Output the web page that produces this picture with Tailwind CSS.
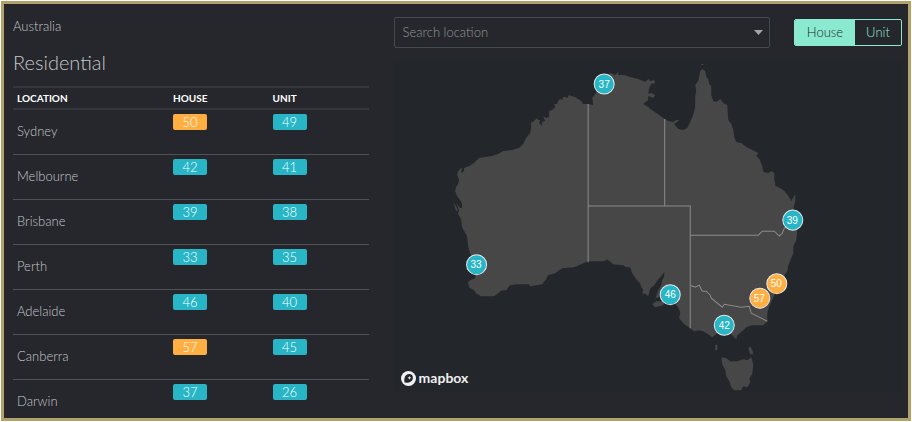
<!DOCTYPE html>
<html lang="en">
<head>
  <meta charset="UTF-8" />
  <meta name="viewport" content="width=device-width, initial-scale=1.0" />
  <title>Australia - Residential</title>
  <script src="https://cdn.jsdelivr.net/npm/@tailwindcss/browser@4"></script>
</head>
<body class="bg-white font-['Lato',sans-serif] font-light text-[#c4c6c9]">

  <div class="h-screen p-px">
    <div class="flex h-full gap-[25px] overflow-hidden border-3 border-[#b2a169] bg-[#26272c] pl-[9px] pr-[6px]">

      <!-- SCORES -->
      <section class="w-2/5 shrink-0 pt-3">
        <p class="text-[13px] leading-5">Australia</p>
        <h1 class="mt-3 text-[20px] leading-7">Residential</h1>

        <table class="mt-[10px] w-full table-fixed text-left text-[13px]">
          <thead class="border-y-2 border-[#34363a] text-[10px] text-white">
            <tr class="h-[22px]">
              <th class="w-[45%] pl-1 font-bold">LOCATION</th>
              <th class="w-[28%] font-bold">HOUSE</th>
              <th class="font-bold">UNIT</th>
            </tr>
          </thead>
          <tbody>
            <tr class="h-[45px] border-b border-[#505155]">
              <td class="pl-1">Sydney</td>
              <td class="pt-1 align-top"><span class="block h-4 w-[34px] rounded-xs bg-[#ffae42] text-center leading-4 text-white">50</span></td>
              <td class="pt-1 align-top"><span class="block h-4 w-[34px] rounded-xs bg-[#28b6c6] text-center leading-4 text-white">49</span></td>
            </tr>
            <tr class="h-[45px] border-b border-[#505155]">
              <td class="pl-1">Melbourne</td>
              <td class="pt-1 align-top"><span class="block h-4 w-[34px] rounded-xs bg-[#28b6c6] text-center leading-4 text-white">42</span></td>
              <td class="pt-1 align-top"><span class="block h-4 w-[34px] rounded-xs bg-[#28b6c6] text-center leading-4 text-white">41</span></td>
            </tr>
            <tr class="h-[45px] border-b border-[#505155]">
              <td class="pl-1">Brisbane</td>
              <td class="pt-1 align-top"><span class="block h-4 w-[34px] rounded-xs bg-[#28b6c6] text-center leading-4 text-white">39</span></td>
              <td class="pt-1 align-top"><span class="block h-4 w-[34px] rounded-xs bg-[#28b6c6] text-center leading-4 text-white">38</span></td>
            </tr>
            <tr class="h-[45px] border-b border-[#505155]">
              <td class="pl-1">Perth</td>
              <td class="pt-1 align-top"><span class="block h-4 w-[34px] rounded-xs bg-[#28b6c6] text-center leading-4 text-white">33</span></td>
              <td class="pt-1 align-top"><span class="block h-4 w-[34px] rounded-xs bg-[#28b6c6] text-center leading-4 text-white">35</span></td>
            </tr>
            <tr class="h-[45px] border-b border-[#505155]">
              <td class="pl-1">Adelaide</td>
              <td class="pt-1 align-top"><span class="block h-4 w-[34px] rounded-xs bg-[#28b6c6] text-center leading-4 text-white">46</span></td>
              <td class="pt-1 align-top"><span class="block h-4 w-[34px] rounded-xs bg-[#28b6c6] text-center leading-4 text-white">40</span></td>
            </tr>
            <tr class="h-[45px] border-b border-[#505155]">
              <td class="pl-1">Canberra</td>
              <td class="pt-1 align-top"><span class="block h-4 w-[34px] rounded-xs bg-[#ffae42] text-center leading-4 text-white">57</span></td>
              <td class="pt-1 align-top"><span class="block h-4 w-[34px] rounded-xs bg-[#28b6c6] text-center leading-4 text-white">45</span></td>
            </tr>
            <tr class="h-[45px]">
              <td class="pl-1">Darwin</td>
              <td class="pt-1 align-top"><span class="block h-4 w-[34px] rounded-xs bg-[#28b6c6] text-center leading-4 text-white">37</span></td>
              <td class="pt-1 align-top"><span class="block h-4 w-[34px] rounded-xs bg-[#28b6c6] text-center leading-4 text-white">26</span></td>
            </tr>
          </tbody>
        </table>
      </section>

      <!-- MAP -->
      <section class="min-w-0 flex-1 pt-[13px]">
        <div class="flex items-center gap-6">
          <div class="relative flex-1">
            <select aria-label="Search location" class="block h-[31px] w-full appearance-none rounded-xs border border-[#424a4e] bg-transparent px-2 text-[13px] text-[#93969a]">
              <option>Search location</option>
            </select>
            <svg class="pointer-events-none absolute right-[7px] top-[13px] h-[5px] w-[9px]" viewBox="0 0 9 5" fill="#a3a5a8"><path d="M0 0h9L4.500 5z" /></svg>
          </div>
          <div class="flex h-[27px] overflow-hidden rounded-xs border border-[#8aead0] text-[13px]">
            <button type="button" class="w-[60px] bg-[#8aead0] text-[#26272c]">House</button>
            <button type="button" class="w-[46px] text-[#8aead0]">Unit</button>
          </div>
        </div>

        <div class="relative mt-3 bg-[#23262b]">
          <svg class="block w-full" viewBox="394 60 508 332" role="img" aria-label="Map of Australia">
            <!-- land -->
            <g fill="#474747">
              <path d="M588 104L583 104L581 101L578 99L575 97L571 96L569 95L567 98L565 97L563 97L562 100L560 99L558 101L557 104L554 104L555 107L552 110L549 111L549 117L546 118L543 116L545 121L542 122L542 126L539 123L540 120L538 120L537 118L534 121L531 123L531 128L530 133L526 138L523 144L519 148L512 150L503 151L498 154L492 156L485 157L479 158L474 163L469 166L464 168L464 171L461 173L462 167L459 170L457 174L459 180L458 184L456 187L455 191L457 196L460 200L462 204L462 208L460 208L456 203L459 210L458 214L461 219L462 227L467 236L468 246L471 256L476 270L475 278L470 280L468 282L469 287L474 290L476 293L481 296L494 296L498 293L502 290L506 290L510 285L517 284L529 284L530 286L542 284L546 279L548 275L555 273L562 268L574 267L588 261L604 261L607 259L613 264L623 265L626 267L630 267L632 273L636 279L640 283L641 287L643 289L642 293L646 294L648 296L650 288L654 285L658 279L661 276L664 272L664 276L662 280L661 285L658 290L656 296L655 298L659 297L665 294L672 300L678 307L680 312L679 318L684 324L690 328L694 331L698 330L703 331L708 334L712 337L717 333L722 336L731 334L736 339L737 335L742 331L746 327L751 325L763 325L767 321L767 313L769 306L773 297L776 291L782 283L784 275L787 271L788 265L793 253L793 246L796 240L797 230L795 215L793 208L795 201L795 194L791 201L788 196L784 191L780 188L775 186L775 183L774 180L774 173L771 171L768 173L763 172L762 166L759 159L756 156L758 153L752 150L746 147L741 143L736 142L734 137L733 130L731 124L728 120L727 105L723 103L720 99L716 102L713 101L711 95L711 86L709 84L708 79L706 77L705 71L702 69L700 71L699 76L698 81L695 85L696 91L695 96L695 107L693 115L690 122L687 128L683 130L678 129L674 124L679 120L676 120L673 122L668 121L663 118L656 113L650 109L648 107L643 104L648 100L648 96L653 98L655 95L651 93L648 94L649 88L651 84L655 83L654 80L650 81L648 79L645 82L638 79L630 77L624 75L618 75L618 72L615 75L610 73L604 79L599 88L595 94L592 98L593 105Z" />
              <path d="M652 304L656 301L665 301L663 305L655 307Z" />
              <path d="M453 202L458 210L456 211Z" />
              <path d="M715 345L717 344L717 350L715 350Z" />
              <path d="M748 348L750 346L752 350L753 354L750 354Z" />
              <path d="M701 64h2v1h-2z" />
              <path d="M721 357L726 358L730 361L737 361L743 359L747 360L751 357L753 364L752 374L749 378L750 382L747 387L743 386L741 390L734 390L731 387L729 381L726 376L725 370L722 364Z" />
            </g>
            <!-- state borders -->
            <g fill="none" stroke="#8b8b8b" stroke-width="1">
              <path d="M588 104V262M664.500 119V206M588 206H690V328" />
              <path d="M690 235H758L762 231L774 231L779 236L782 233L784 228L790 226" />
              <path d="M690 285L695 287L699 285L702 291L706 291L710 295L711 298L722 307L724 304L741 307L749 306L751 313L767 321" />
            </g>
            <!-- city scores -->
            <g stroke="#e6e9ea" stroke-width="1">
              <circle cx="604" cy="84" r="10" fill="#28b6c6" />
              <circle cx="476.500" cy="264.500" r="10" fill="#28b6c6" />
              <circle cx="670" cy="294.500" r="10" fill="#28b6c6" />
              <circle cx="724" cy="325" r="10" fill="#28b6c6" />
              <circle cx="792.500" cy="220" r="10" fill="#28b6c6" />
              <circle cx="776.500" cy="283.500" r="10" fill="#ffae42" />
              <circle cx="759.500" cy="298" r="10" fill="#ffae42" />
            </g>
            <g class="font-['Liberation_Sans',sans-serif] text-[10px] font-normal" fill="#fff" text-anchor="middle">
              <text x="604" y="88">37</text>
              <text x="476" y="268">33</text>
              <text x="670" y="298">46</text>
              <text x="724" y="329">42</text>
              <text x="792" y="224">39</text>
              <text x="776" y="287">50</text>
              <text x="759" y="302">57</text>
            </g>
          </svg>

          <a href="#" class="absolute bottom-1 left-[7px] flex items-center gap-[3px] text-[14px] leading-5 font-bold text-[#eeeeee]">
            <svg class="h-[15px] w-[15px]" viewBox="0 0 16 16">
              <circle cx="8" cy="8" r="8" fill="#f2f2f2" />
              <path d="M3.700 12.300C3 7.500 4.500 3.500 8.700 3.300C11.200 3.200 12.900 5 12.700 7.400C12.400 11.500 8.500 13 3.700 12.300Z" fill="#23262b" />
              <path d="M9 5.300l.6 1.400 1.400.6-1.400.6-.6 1.400-.6-1.400-1.400-.6 1.400-.6z" fill="#f2f2f2" />
            </svg>
            mapbox
          </a>
        </div>
      </section>

    </div>
  </div>

</body>
</html>
